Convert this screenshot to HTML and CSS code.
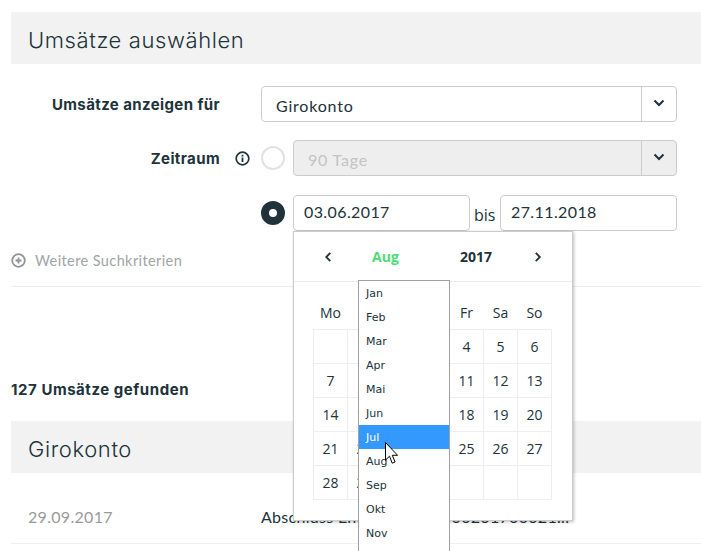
FILE: index.html
```html
<!DOCTYPE html>
<html lang="de">
<head>
    <meta charset="UTF-8">
    <meta name="viewport" content="width=device-width, initial-scale=1.0">
    <title>Umsätze auswählen</title>
    <link rel="stylesheet" href="styles.css">
</head>
<body>
    <section class="panel-title">Umsätze auswählen</section>

    <form class="search-form">
        <div class="form-row">
            <div class="form-label">Umsätze anzeigen für</div>
            <div class="info-slot"></div>
            <div class="select-box">
                <span class="select-value">Girokonto</span>
                <span class="select-arrow">
                    <svg width="12" height="8" viewBox="0 0 12 8"><path d="M1.500 1.500 6 6l4.500-4.500" fill="none" stroke="#20323a" stroke-width="2"/></svg>
                </span>
            </div>
        </div>

        <div class="form-row">
            <div class="form-label">Zeitraum</div>
            <div class="info-slot">
                <svg width="15" height="15" viewBox="0 0 15 15"><circle cx="7.500" cy="7.500" r="6.300" fill="none" stroke="#20323a" stroke-width="1.700"/><rect x="6.600" y="6.500" width="1.800" height="4.500" fill="#20323a"/><rect x="6.600" y="3.800" width="1.800" height="1.700" fill="#20323a"/></svg>
            </div>
            <span class="radio"></span>
            <div class="select-box disabled">
                <span class="select-value">90 Tage</span>
                <span class="select-arrow">
                    <svg width="12" height="8" viewBox="0 0 12 8"><path d="M1.500 1.500 6 6l4.500-4.500" fill="none" stroke="#20323a" stroke-width="2"/></svg>
                </span>
            </div>
        </div>

        <div class="form-row date-row">
            <span class="radio checked"></span>
            <div class="date-field">03.06.2017</div>
            <span class="date-sep">bis</span>
            <div class="date-field">27.11.2018</div>
        </div>

        <div class="more-criteria">
            <svg width="15" height="15" viewBox="0 0 15 15"><circle cx="7.500" cy="7.500" r="6.300" fill="none" stroke="#8f9496" stroke-width="1.800"/><path d="M7.500 4.500v6M4.500 7.500h6" stroke="#8f9496" stroke-width="1.800"/></svg>
            <span>Weitere Suchkriterien</span>
        </div>
    </form>

    <div class="result-count">127 Umsätze gefunden</div>

    <section class="panel-title">Girokonto</section>

    <div class="booking-row">
        <span class="booking-date">29.09.2017</span>
        <span class="booking-text">Abschluss Entgelt 00032400201700021...</span>
    </div>

    <!-- Datepicker -->
    <div class="datepicker">
        <div class="dp-head">
            <svg width="9" height="12" viewBox="0 0 9 12"><path d="M7 1.500 2.500 6 7 10.500" fill="none" stroke="#20323a" stroke-width="2"/></svg>
            <span class="dp-month">Aug</span>
            <span class="dp-year">2017</span>
            <svg width="9" height="12" viewBox="0 0 9 12"><path d="M2 1.500 6.500 6 2 10.500" fill="none" stroke="#20323a" stroke-width="2"/></svg>
        </div>
        <table class="dp-table">
            <thead>
                <tr><th>Mo</th><th>Di</th><th>Mi</th><th>Do</th><th>Fr</th><th>Sa</th><th>So</th></tr>
            </thead>
            <tbody>
                <tr><td></td><td>1</td><td>2</td><td>3</td><td>4</td><td>5</td><td>6</td></tr>
                <tr><td>7</td><td>8</td><td>9</td><td>10</td><td>11</td><td>12</td><td>13</td></tr>
                <tr><td>14</td><td>15</td><td>16</td><td>17</td><td>18</td><td>19</td><td>20</td></tr>
                <tr><td>21</td><td>22</td><td>23</td><td>24</td><td>25</td><td>26</td><td>27</td></tr>
                <tr><td>28</td><td>29</td><td>30</td><td>31</td><td></td><td></td><td></td></tr>
            </tbody>
        </table>
    </div>

    <!-- Native month dropdown -->
    <ul class="month-list">
        <li>Jan</li>
        <li>Feb</li>
        <li>Mar</li>
        <li>Apr</li>
        <li>Mai</li>
        <li>Jun</li>
        <li class="active">Jul</li>
        <li>Aug</li>
        <li>Sep</li>
        <li>Okt</li>
        <li>Nov</li>
    </ul>

    <svg class="cursor" width="13" height="23" viewBox="0 0 13 23"><path d="M.5.500v17.500l4-3.800 2.700 7 2.900-1.200-2.800-6.700h5.300z" fill="#fff" stroke="#000" stroke-width="1"/></svg>
</body>
</html>
```

FILE: styles.css
```css
body {
    margin: 0;
    padding: 12px 0 0 11px;
    height: 539px;
    overflow: hidden;
    position: relative;
    background: #fff;
    color: #20323a;
    font-family: "Lato", "Liberation Sans", sans-serif;
    font-size: 16px;
}

.panel-title {
    height: 52px;
    line-height: 56px;
    padding-left: 17px;
    background: #f2f2f2;
    font-family: "Inter", sans-serif;
    font-weight: 300;
    font-size: 22px;
    letter-spacing: 0.6px;
}

/* Suchformular */
.search-form {
    width: 690px;
    height: 223px;
    padding-top: 22px;
    box-sizing: border-box;
    border-bottom: 1px solid #eee;
}

.form-row {
    display: flex;
    align-items: center;
    height: 36px;
    margin-bottom: 18px;
}

.form-row + .form-row {
    margin-bottom: 19px;
}

.form-label {
    width: 209px;
    font-family: "Inter", sans-serif;
    font-weight: 700;
    font-size: 15px;
    letter-spacing: 0.4px;
    text-align: right;
}

.info-slot {
    display: flex;
    width: 41px;
    padding-left: 15px;
    box-sizing: border-box;
}

.select-box {
    display: flex;
    flex: none;
    width: 416px;
    height: 36px;
    box-sizing: border-box;
    border: 1px solid #ccc;
    border-radius: 4px;
    background: #fff;
}

.select-value {
    flex: 1;
    padding-left: 14px;
    line-height: 38px;
    font-size: 16px;
    letter-spacing: 0.8px;
}

.select-arrow {
    display: flex;
    align-items: center;
    justify-content: center;
    width: 35px;
    border-left: 1px solid #ccc;
    padding-bottom: 2px;
    box-sizing: border-box;
}

.radio {
    width: 24px;
    height: 24px;
    flex: none;
    box-sizing: border-box;
    border: 2px solid #e2e2e2;
    border-radius: 50%;
    background: #fff;
    margin-right: 8px;
}

.radio.checked {
    border: 8px solid #20323a;
}

.select-box.disabled {
    width: 384px;
    background: #eee;
}

.select-box.disabled .select-value {
    color: #c4c4c4;
}

.date-row {
    padding-left: 250px;
}

.date-field {
    width: 177px;
    height: 36px;
    line-height: 32px;
    padding-left: 10px;
    box-sizing: border-box;
    border: 1px solid #ccc;
    border-radius: 4px;
    letter-spacing: 0.4px;
}

.date-sep {
    width: 30px;
    padding: 4px 0 0 4px;
    box-sizing: border-box;
    font-family: "Open Sans", sans-serif;
    font-size: 16px;
}

.more-criteria {
    display: flex;
    align-items: center;
    gap: 9px;
    margin-top: 21px;
    color: #a0a4a6;
    font-size: 14.500px;
    letter-spacing: 0.4px;
}

.result-count {
    margin-top: 93px;
    height: 20px;
    line-height: 20px;
    font-family: "Inter", sans-serif;
    font-weight: 700;
    font-size: 15px;
    letter-spacing: 0.55px;
    margin-bottom: 21px;
}

/* Umsatzzeile */
.booking-row {
    display: flex;
    width: 690px;
    height: 71px;
    box-sizing: border-box;
    padding: 34px 0 0 17px;
    border-bottom: 1px solid #eee;
    font-size: 16px;
    letter-spacing: 0.3px;
}

.booking-date {
    width: 233px;
    color: #999;
}

/* Datepicker */
.datepicker {
    position: absolute;
    left: 293px;
    top: 231px;
    width: 280px;
    height: 290px;
    box-sizing: border-box;
    background: #fff;
    border: 1px solid #ccc;
    box-shadow: 1px 1px 3px rgba(0,0,0,0.25);
    font-family: "Open Sans", sans-serif;
}

.dp-head {
    display: flex;
    align-items: center;
    height: 49px;
    padding: 0 30px;
    border-bottom: 1px solid #eee;
    font-weight: 700;
    font-size: 14px;
}

.dp-month {
    margin-left: 40px;
    color: #4cdc78;
}

.dp-year {
    margin-left: 61px;
    margin-right: 42px;
}

.dp-table {
    border-collapse: collapse;
    margin: 14px 0 0 19px;
    font-size: 14px;
}

.dp-table th {
    height: 33px;
    font-weight: 400;
    text-align: center;
    padding: 0;
    vertical-align: middle;
}

.dp-table td {
    width: 33px;
    height: 33px;
    padding: 0;
    text-align: center;
    border: 1px solid #eee;
}

/* Monatsliste */
.month-list {
    position: absolute;
    left: 358px;
    top: 280px;
    width: 92px;
    height: 280px;
    box-sizing: border-box;
    margin: 0;
    padding: 0;
    list-style: none;
    background: #fff;
    border: 1px solid #a0a0a0;
    font-family: "DejaVu Sans", sans-serif;
    font-size: 11px;
}

.month-list li {
    height: 24px;
    line-height: 26px;
    padding-left: 7px;
}

.month-list li.active {
    background: #3399ff;
    color: #fff;
}

.cursor {
    position: absolute;
    left: 385px;
    top: 442px;
}
```
